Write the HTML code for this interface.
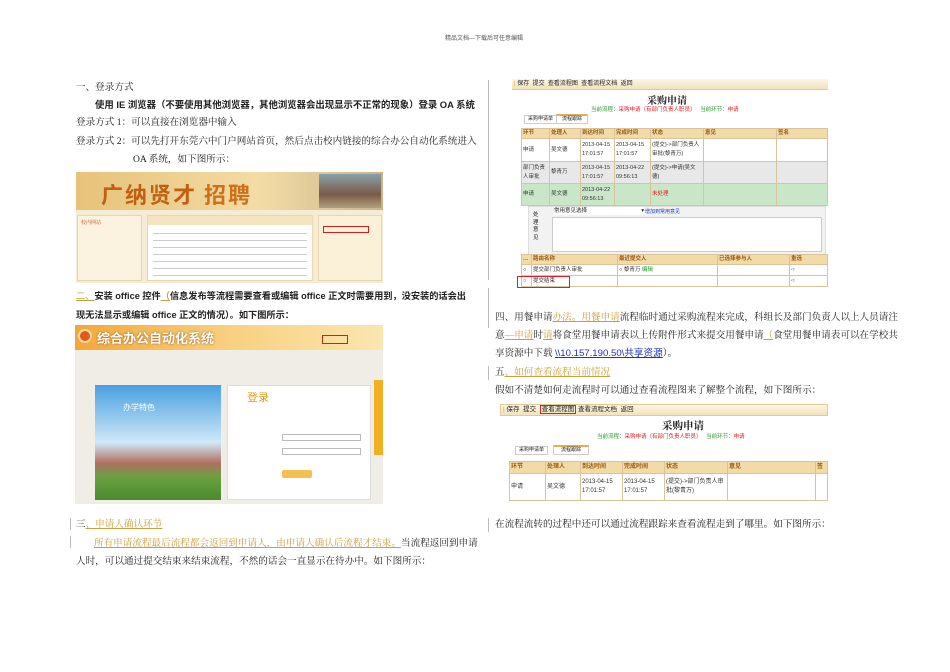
<!DOCTYPE html>
<html><head><meta charset="utf-8">
<style>
*{margin:0;padding:0;box-sizing:border-box}
body{width:950px;height:672px;background:#fff;position:relative;overflow:hidden;font-family:"Liberation Serif","Noto Serif CJK SC","Noto Sans CJK SC",serif;color:#222}
.a{position:absolute;white-space:nowrap}
.t{font-size:9.6px;line-height:12px}
.b{font-weight:bold;font-family:"Liberation Sans","Noto Sans CJK SC",sans-serif}
.g{color:#c8a040;text-decoration:underline}
.s{font-family:"Liberation Sans","Noto Sans CJK SC",sans-serif}
table{border-collapse:collapse;table-layout:fixed;font-family:"Liberation Sans","Noto Sans CJK SC",sans-serif;font-size:5.5px;color:#333}
td{border:1px solid #d8c39a;padding:0 1px;vertical-align:middle;line-height:9px;white-space:normal;word-break:break-all;overflow:hidden}
.hd td{background:#f3dba8;color:#9a5a10;font-weight:bold;height:10px}
.vl{position:absolute;width:1px;background:#bbb}
</style></head><body>
<div class="a s" style="left:445px;top:33px;font-size:6px;color:#555">精品文档---下载后可任意编辑</div>

<div class="a t" style="left:76px;top:82px">一、登录方式</div>
<div class="a t b" style="left:95px;top:99px;font-size:9.4px">使用 IE 浏览器（不要使用其他浏览器，其他浏览器会出现显示不正常的现象）登录 OA 系统</div>
<div class="a t" style="left:76px;top:117px">登录方式 1：可以直接在浏览器中输入</div>
<div class="a t" style="left:76px;top:136px">登录方式 2：可以先打开东莞六中门户网站首页，然后点击校内链接的综合办公自动化系统进入</div>
<div class="a t" style="left:133px;top:154px">OA 系统，如下图所示：</div>

<div class="a" style="left:76px;top:172px;width:307px;height:111px;background:#f6ecd6">
 <div class="a" style="left:0;top:0;width:307px;height:38px;background:linear-gradient(90deg,#e7c27a,#f3dca6 60%,#c9b48a)"></div>
 <div class="a" style="left:243px;top:2px;width:62px;height:34px;background:linear-gradient(#8aa0a8,#7a5a48 60%,#b0a080)"></div>
 <div class="a" style="left:25px;top:6px;font-size:22px;color:#c06010;font-family:'Noto Sans CJK SC',sans-serif;font-weight:bold;letter-spacing:2px">广纳贤才 <span style="color:#d07018">招聘</span></div>
 <div class="a" style="left:1px;top:43px;width:65px;height:66px;background:#fbf2df;border:1px solid #e8d6b0"><div style="font-size:5px;color:#c05020;padding:3px">校内网站</div></div>
 <div class="a" style="left:71px;top:43px;width:166px;height:66px;background:#fff;border:1px solid #e8d6b0">
  <div style="height:9px;background:#f4e4c0"></div>
  <div style="margin:4px 5px;height:50px;background:repeating-linear-gradient(#fff 0 4px,#ccc 4px 5px,#fff 5px 7px)"></div></div>
 <div class="a" style="left:242px;top:43px;width:64px;height:66px;background:#fbf0d8;border:1px solid #e8d6b0"></div>
 <div class="a" style="left:247px;top:54px;width:46px;height:7px;border:1px solid #d02020"></div>
</div>

<div class="a t b" style="left:76px;top:290px;font-size:9.2px"><span class="g" style="font-weight:normal">二、</span>安装 office 控件<span class="g">（</span>信息发布等流程需要查看或编辑 office 正文时需要用到，没安装的话会出</div>
<div class="a t b" style="left:76px;top:309px;font-size:9.2px">现无法显示或编辑 office 正文的情况）。如下图所示：</div>

<div class="a" style="left:75px;top:325px;width:308px;height:179px;background:#f0ede6;overflow:hidden">
 <div class="a" style="left:0;top:0;width:308px;height:25px;background:linear-gradient(90deg,#f2a838,#f8d080 50%,#fbe6b0)"></div>
 <div class="a" style="left:3px;top:4px;width:14px;height:14px;border-radius:50%;background:#e05a20;border:2px solid #f7d9a0"></div>
 <div class="a" style="left:22px;top:3px;font-size:13px;font-weight:bold;color:#fff;font-family:'Noto Sans CJK SC',sans-serif;text-shadow:0 0 2px #a05010">综合办公自动化系统</div>
 <div class="a" style="left:247px;top:10px;width:26px;height:9px;border:1px solid #d02020"></div>
 <div class="a" style="left:20px;top:60px;width:126px;height:115px;background:linear-gradient(#4aa0e0,#cfe8f8 50%,#b07060 68%,#6aa040 80%,#4a8a30)"></div>
 <div class="a" style="left:48px;top:77px;font-size:8px;color:#fff;font-family:'Noto Sans CJK SC',sans-serif">办学特色</div>
 <div class="a" style="left:152px;top:60px;width:144px;height:115px;background:#fff;border:1px solid #ddd"></div>
 <div class="a" style="left:172px;top:64px;font-size:11px;color:#e0a020;font-family:'Noto Sans CJK SC',sans-serif">登录</div>
 <div class="a" style="left:207px;top:109px;width:79px;height:7px;border:1px solid #bbb;background:#fff"></div>
 <div class="a" style="left:207px;top:123px;width:79px;height:7px;border:1px solid #bbb;background:#fff"></div>
 <div class="a" style="left:207px;top:145px;width:30px;height:8px;background:#f6c050;border-radius:2px"></div>
 <div class="a" style="left:299px;top:55px;width:9px;height:75px;background:#f0b020"></div>
</div>

<div class="a t" style="left:76px;top:519px">三<span class="g">、申请人确认环节</span></div>
<div class="a t" style="left:94px;top:538px"><span class="g">所有申请流程最后流程都会返回到申请人，由申请人确认后流程才结束。</span>当流程返回到申请</div>
<div class="a t" style="left:76px;top:556px">人时，可以通过提交结束来结束流程，不然的话会一直显示在待办中。如下图所示：</div>

<div class="vl" style="left:488px;top:80px;height:200px"></div>
<div class="vl" style="left:488px;top:288px;height:40px"></div>
<div class="vl" style="left:488px;top:366px;height:14px"></div>
<div class="vl" style="left:488px;top:518px;height:14px"></div>
<div class="vl" style="left:70px;top:518px;height:12px"></div>
<div class="vl" style="left:70px;top:536px;height:12px"></div>

<div class="a" style="left:512px;top:79px;width:316px;height:11px;background:linear-gradient(#fdf6e6,#f3e2bc);border-bottom:1px solid #e2c992"></div>
<div class="a s" style="left:514px;top:80px;font-size:6px;line-height:9px"><span style="color:#e0a020">|</span> 保存 &nbsp;提交 &nbsp;查看流程图 &nbsp;查看流程文档 &nbsp;返回</div>
<div class="a" style="left:647px;top:92px;font-size:10px;font-weight:bold">采购申请</div>
<div class="a s" style="left:591px;top:105px;font-size:5.5px;color:#2a9a2a">当前流程：<span style="color:#e02020">采购申请（有部门负责人职员）</span> &nbsp; 当前环节：<span style="color:#e02020">申请</span></div>
<div class="a s" style="left:524px;top:115px;font-size:5px;border:1px solid #ccc;padding:0 3px;line-height:7px">采购申请单</div>
<div class="a s" style="left:556px;top:114px;font-size:5px;border:1px solid #ccc;border-top:2px solid #e2b050;padding:0 5px;line-height:7px;background:#fff">流程跟踪</div>
<table class="a" style="left:521px;top:128px;width:307px">
<colgroup><col style="width:28px"><col style="width:31px"><col style="width:34px"><col style="width:36px"><col style="width:53px"><col style="width:73px"><col></colgroup>
<tr class="hd"><td>环节</td><td>处理人</td><td>到达时间</td><td>完成时间</td><td>状态</td><td>意见</td><td>签名</td></tr>
<tr style="height:23px"><td>申请</td><td>吴文德</td><td>2013-04-15<br>17:01:57</td><td>2013-04-15<br>17:01:57</td><td>(提交)->部门负责人审批(黎青万)</td><td></td><td></td></tr>
<tr style="height:22px;background:#e8e8e8"><td>部门负责人审批</td><td>黎青万</td><td>2013-04-15<br>17:01:57</td><td>2013-04-22<br>09:56:13</td><td>(提交)->申请(吴文德)</td><td></td><td></td></tr>
<tr style="height:22px;background:#c9e6c9"><td>申请</td><td>吴文德</td><td>2013-04-22<br>09:56:13</td><td></td><td style="color:#e02020">未处理</td><td></td><td></td></tr>
</table>
<div class="a" style="left:528px;top:206px;width:298px;height:49px;background:#f2f2f2;border:1px solid #ddd"></div>
<div class="a s" style="left:533px;top:212px;font-size:5.5px;line-height:7.5px;width:6px;white-space:normal">处理意见</div>
<div class="a s" style="left:554px;top:207px;width:90px;height:8px;background:#fff;font-size:5.5px;line-height:8px">常用意见选择 <span style="float:right">▾</span></div>
<div class="a s" style="left:645px;top:208px;font-size:5px;color:#2040c0">增加到常用意见</div>
<div class="a" style="left:552px;top:217px;width:270px;height:35px;background:#fff;border:1px solid #ccc"></div>
<table class="a" style="left:521px;top:254px;width:307px">
<colgroup><col style="width:10px"><col style="width:86px"><col style="width:100px"><col style="width:72px"><col></colgroup>
<tr class="hd"><td>…</td><td>路由名称</td><td>最近提交人</td><td>已选择参与人</td><td>重选</td></tr>
<tr style="height:11px"><td>○</td><td>提交部门负责人审批</td><td>○ 黎青万 <span style="color:#2a9a2a">编辑</span></td><td></td><td style="color:#5a90d0">➪</td></tr>
<tr style="height:11px"><td>○</td><td>提交结束</td><td></td><td></td><td style="color:#5a90d0">➪</td></tr>
</table>
<div class="a" style="left:517px;top:276px;width:53px;height:12px;border:1px solid #e02020"></div>

<div class="a t" style="left:495px;top:312px">四、用餐申请<span class="g">办法。用餐申请</span>流程临时通过采购流程来完成，科组长及部门负责人以上人员请注</div>
<div class="a t" style="left:495px;top:330px">意<span class="g">—申请</span>时<span class="g">请</span>将食堂用餐申请表以上传附件形式来提交用餐申请<span class="g">（</span>食堂用餐申请表可以在学校共</div>
<div class="a t" style="left:495px;top:348px">享资源中下载 <span class="s" style="color:#2030c0;text-decoration:underline">\\10.157.190.50\共享资源</span>）。</div>
<div class="a t" style="left:495px;top:367px">五<span class="g">、如何查看流程当前情况</span></div>
<div class="a t" style="left:495px;top:385px">假如不清楚如何走流程时可以通过查看流程图来了解整个流程，如下图所示：</div>

<div class="a" style="left:500px;top:404px;width:328px;height:12px;background:linear-gradient(#fdf6e6,#f3e2bc);border:1px solid #e2c992"></div>
<div class="a s" style="left:503px;top:405px;font-size:6.5px;line-height:10px"><span style="color:#e0a020">|</span> 保存 &nbsp;提交 &nbsp;<span style="border:1px solid #e02020;padding:0 1px">查看流程图</span> 查看流程文档 &nbsp;返回</div>
<div class="a" style="left:662px;top:418px;font-size:10.5px;font-weight:bold">采购申请</div>
<div class="a s" style="left:597px;top:432px;font-size:5.5px;color:#2a9a2a">当前流程：<span style="color:#e02020">采购申请（有部门负责人职员）</span> &nbsp; 当前环节：<span style="color:#e02020">申请</span></div>
<div class="a s" style="left:515px;top:446px;font-size:5px;border:1px solid #ccc;padding:0 3px;line-height:7px">采购申请单</div>
<div class="a s" style="left:553px;top:445px;font-size:5px;border:1px solid #ccc;border-top:2px solid #e2b050;padding:0 7px;line-height:7px;background:#fff">流程跟踪</div>
<table class="a" style="left:509px;top:461px;width:319px;font-size:6px">
<colgroup><col style="width:36px"><col style="width:35px"><col style="width:42px"><col style="width:42px"><col style="width:63px"><col style="width:88px"><col></colgroup>
<tr class="hd" style="height:12px"><td>环节</td><td>处理人</td><td>到达时间</td><td>完成时间</td><td>状态</td><td>意见</td><td>签</td></tr>
<tr style="height:27px"><td>申请</td><td>吴文德</td><td>2013-04-15<br>17:01:57</td><td>2013-04-15<br>17:01:57</td><td>(提交)->部门负责人审批(黎青万)</td><td></td><td></td></tr>
</table>

<div class="a t" style="left:495px;top:519px">在流程流转的过程中还可以通过流程跟踪来查看流程走到了哪里。如下图所示：</div>
</body></html>
